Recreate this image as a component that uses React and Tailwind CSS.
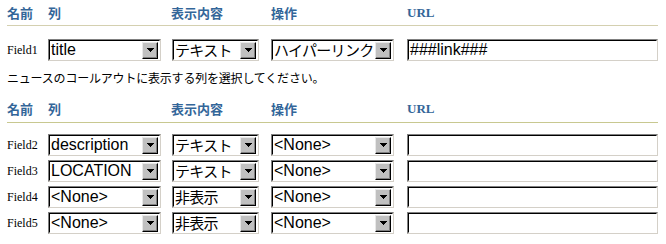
import React from "react";

const jp = { fontFamily: '"Noto Sans CJK JP", "Noto Sans", sans-serif' };
const selFont = { fontFamily: '"Liberation Sans", "Noto Sans CJK JP", sans-serif' };
const jpSel = { fontFamily: '"Noto Sans CJK JP", sans-serif', fontSize: "15px", letterSpacing: "-0.7px" };

const isJp = (t) => /[\u3000-\u9fff]/.test(t);

function Arrow() {
  return (
    <svg width="7" height="4" viewBox="0 0 7 4" shapeRendering="crispEdges">
      <rect x="0" y="0" width="7" height="1" fill="#000" />
      <rect x="1" y="1" width="5" height="1" fill="#000" />
      <rect x="2" y="2" width="3" height="1" fill="#000" />
      <rect x="3" y="3" width="1" height="1" fill="#000" />
    </svg>
  );
}

function Sel({ w, text }) {
  return (
    <div className={`flex h-[22px] ${w} border border-t-[#808080] border-l-[#808080] border-b-[#d4d0c8] border-r-[#d4d0c8]`}>
      <div className="flex flex-1 min-w-0 items-center border border-t-black border-l-black border-b-white border-r-white bg-white pr-[1px]">
        <span
          className="flex-1 whitespace-nowrap pl-[1px] text-[16px] leading-[18px] text-black"
          style={isJp(text) ? jpSel : selFont}
        >
          {text}
        </span>
        <div className="flex h-[17px] w-[16px] shrink-0 items-center justify-center border border-t-[#e8e8e8] border-l-[#e8e8e8] border-b-black border-r-black bg-[#c0c0c0] shadow-[inset_-1px_-1px_#808080]">
          <Arrow />
        </div>
      </div>
    </div>
  );
}

function Input({ text }) {
  return (
    <div className="flex h-[22px] w-[251px] border border-t-[#808080] border-l-[#808080] border-b-[#d4d0c8] border-r-[#d4d0c8]">
      <div className="flex flex-1 items-center border border-t-black border-l-black border-b-white border-r-white bg-white">
        <span className="pl-[1px] text-[16px] leading-[18px] text-black whitespace-nowrap" style={selFont}>
          {text}
        </span>
      </div>
    </div>
  );
}

function Header({ h, line }) {
  return (
    <div className={`flex ${h} items-center border-b ${line} text-[13px] font-bold text-[#336699]`} style={jp}>
      <div className="w-[41px]">名前</div>
      <div className="w-[123px]">列</div>
      <div className="w-[100px]">表示内容</div>
      <div className="w-[136px]">操作</div>
      <div className="w-[251px] text-[13px] font-bold" style={{ fontFamily: '"Liberation Serif", serif' }}>URL</div>
    </div>
  );
}

function Row({ label, c1, c2, c3, url, className = "" }) {
  return (
    <div className={`flex h-[22px] items-center ${className}`}>
      <div className="w-[41px] text-[12px] text-black" style={{ fontFamily: '"Liberation Serif", serif' }}>{label}</div>
      <div className="w-[124px]"><Sel w="w-[113px]" text={c1} /></div>
      <div className="w-[99px]"><Sel w="w-[87px]" text={c2} /></div>
      <div className="w-[136px]"><Sel w="w-[123px]" text={c3} /></div>
      <Input text={url} />
    </div>
  );
}

export default function App() {
  return (
    <div className="h-[244px] w-[666px] overflow-hidden bg-white pl-[7px]">
      <div className="w-[651px]">
        <Header h="h-[26px]" line="border-[#d4d0b0]" />
        <Row label="Field1" c1="title" c2="テキスト" c3="ハイパーリンク" url="###link###" className="mt-[13px]" />
        <div className="mt-[9px] h-[16px] text-[12px] leading-[16px] tracking-[-0.2px] text-black whitespace-nowrap" style={jp}>
          ニュースのコールアウトに表示する列を選択してください。
        </div>
        <Header h="h-[27px] mt-[10px]" line="border-[#c8c890]" />
        <div className="mt-[11px] flex flex-col gap-[4px]">
          <Row label="Field2" c1="description" c2="テキスト" c3="<None>" url="" />
          <Row label="Field3" c1="LOCATION" c2="テキスト" c3="<None>" url="" />
          <Row label="Field4" c1="<None>" c2="非表示" c3="<None>" url="" />
          <Row label="Field5" c1="<None>" c2="非表示" c3="<None>" url="" />
        </div>
      </div>
    </div>
  );
}
